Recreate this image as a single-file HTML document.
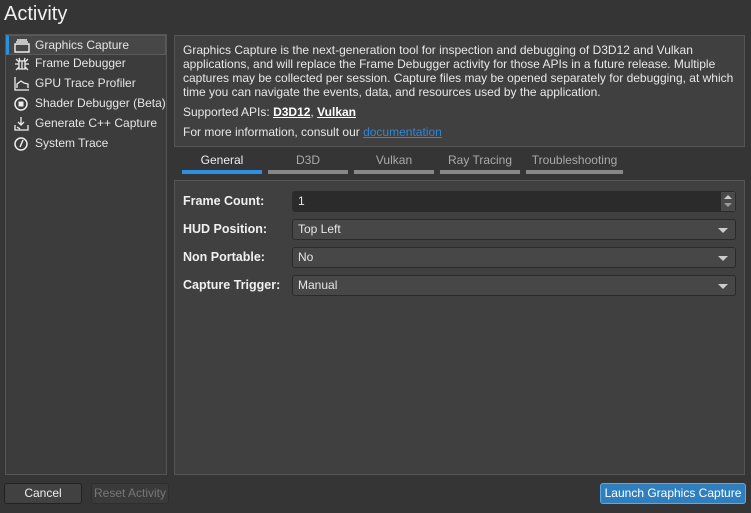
<!DOCTYPE html>
<html><head><style>
*{box-sizing:border-box;margin:0;padding:0}
body{width:751px;height:513px;background:#353535;font-family:"Liberation Sans",sans-serif;font-size:12px;color:#e6e6e6;position:relative;overflow:hidden}
.a{position:absolute}
.title{left:4px;top:3px;font-size:20px;color:#f0f0f0}
.left{left:5px;top:34px;width:162px;height:441px;border:1px solid #555;background:#3c3c3c}
.item{position:absolute;left:0;width:160px;height:20px;line-height:19px;padding-left:29px;white-space:nowrap}
.item.sel{background:#474747;border:1px solid #5a5a5a;border-left:3px solid #2d8fdf;padding-left:26px}
.ic{position:absolute;left:8px;top:3px}
.info{left:174px;top:35px;width:571px;height:112px;border:1px solid #555;background:#404040;padding:7px 8px;line-height:14px;color:#e8e8e8}
.info b{text-decoration:underline;color:#fff}
.tab{top:152px;height:22px;width:80px;text-align:center;color:#aaa;border-bottom:4px solid #888;line-height:16px}
.form{left:174px;top:180px;width:571px;height:295px;border:1px solid #555;background:#404040}
.lbl{left:183px;font-weight:bold;color:#f0f0f0;font-size:12.5px}
.fld{left:292px;width:444px;height:21px;border:1px solid #2a2a2a;border-radius:3px;background:#474747;padding-left:5px;line-height:19px}
.arr{position:absolute;right:7px;top:8px;width:0;height:0;border-left:5px solid transparent;border-right:5px solid transparent;border-top:5px solid #ccc}
.btn{top:483px;height:21px;border:1px solid #222;border-radius:3px;background:#414141;text-align:center;line-height:19px}
</style></head><body>
<div class="a title">Activity</div>
<div class="a left">
 <div class="item sel" style="top:0">
  <svg class="ic" style="left:5px" width="16" height="14" viewBox="0 0 16 14"><path d="M1 5h14v8H1zM2 3h12M3 1h10" fill="none" stroke="#eee" stroke-width="1.4"/></svg>Graphics Capture</div>
 <div class="item" style="top:19px"><svg class="ic" width="16" height="14" viewBox="0 0 16 14"><path d="M5 4h6v8H5zM8 4v8M5 7H1M11 7h4M5 10L2 13M11 10l3 3M5 5L2 2M11 5l3-3M6 4L5 1M10 4l1-3" fill="none" stroke="#eee" stroke-width="1.3"/></svg>Frame Debugger</div>
 <div class="item" style="top:39px"><svg class="ic" width="16" height="14" viewBox="0 0 16 14"><path d="M1 0v13h14M3 11V7l4-3 3 2 4 1v4" fill="none" stroke="#eee" stroke-width="1.3"/></svg>GPU Trace Profiler</div>
 <div class="item" style="top:59px"><svg class="ic" width="16" height="14" viewBox="0 0 16 14"><circle cx="7" cy="7" r="6" fill="none" stroke="#eee" stroke-width="1.5"/><rect x="4.5" y="4.5" width="5" height="5" fill="#eee"/></svg>Shader Debugger (Beta)</div>
 <div class="item" style="top:79px"><svg class="ic" width="16" height="14" viewBox="0 0 16 14"><path d="M7 0v8M4 5l3 3 3-3M1 8v5h13V8M3 10l3 2" fill="none" stroke="#eee" stroke-width="1.3"/></svg>Generate C++ Capture</div>
 <div class="item" style="top:99px"><svg class="ic" width="16" height="14" viewBox="0 0 16 14"><circle cx="7" cy="7" r="6" fill="none" stroke="#eee" stroke-width="1.5"/><path d="M9 3L6 10" stroke="#eee" stroke-width="1.5"/></svg>System Trace</div>
</div>
<div class="a info">Graphics Capture is the next-generation tool for inspection and debugging of D3D12 and Vulkan applications, and will replace the Frame Debugger activity for those APIs in a future release. Multiple captures may be collected per session. Capture files may be opened separately for debugging, at which time you can navigate the events, data, and resources used by the application.
<div style="margin-top:6px">Supported APIs: <b>D3D12</b>, <b>Vulkan</b></div>
<div style="margin-top:6px">For more information, consult our <span style="color:#2f86d6;text-decoration:underline">documentation</span></div></div>
<div class="a tab" style="left:182px;color:#eee;border-color:#2d8fdf">General</div>
<div class="a tab" style="left:268px">D3D</div>
<div class="a tab" style="left:354px">Vulkan</div>
<div class="a tab" style="left:440px">Ray Tracing</div>
<div class="a tab" style="left:526px;width:97px">Troubleshooting</div>
<div class="a form"></div>
<div class="a lbl" style="top:194px">Frame Count:</div>
<div class="a lbl" style="top:222px">HUD Position:</div>
<div class="a lbl" style="top:250px">Non Portable:</div>
<div class="a lbl" style="top:278px">Capture Trigger:</div>
<div class="a fld" style="top:191px;background:#2b2b2b;border-color:#2b2b2b">1<div style="position:absolute;right:0;top:0;width:14px;height:19px;background:#4a4a4a"><div style="position:absolute;left:3px;top:3px;border-left:4px solid transparent;border-right:4px solid transparent;border-bottom:4px solid #ccc"></div><div style="position:absolute;left:3px;top:11px;border-left:4px solid transparent;border-right:4px solid transparent;border-top:4px solid #999"></div></div></div>
<div class="a fld" style="top:219px">Top Left<div class="arr"></div></div>
<div class="a fld" style="top:247px">No<div class="arr"></div></div>
<div class="a fld" style="top:275px">Manual<div class="arr"></div></div>
<div class="a btn" style="left:4px;width:78px;color:#eee">Cancel</div>
<div class="a btn" style="left:91px;width:78px;color:#777;border-color:#2e2e2e;background:#3a3a3a">Reset Activity</div>
<div class="a btn" style="left:600px;width:146px;background:#2f7fbe;border-color:#5aaae6;color:#fff">Launch Graphics Capture</div>
</body></html>
